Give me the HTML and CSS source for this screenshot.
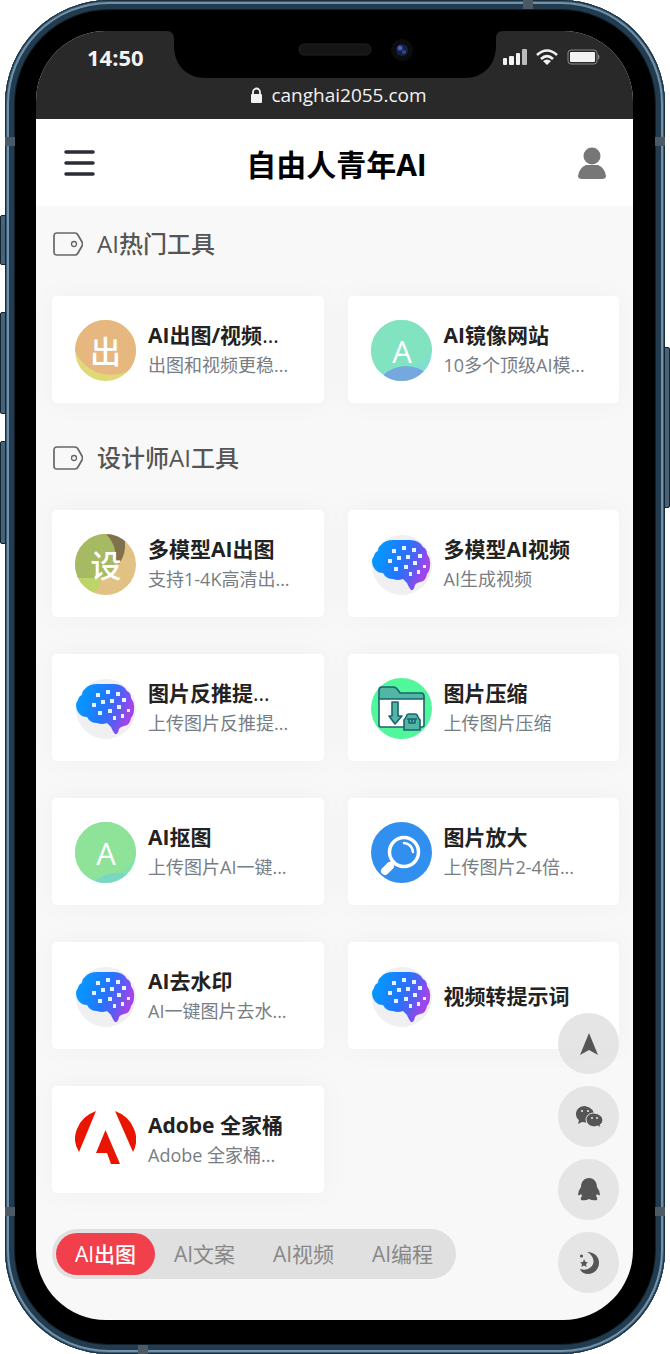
FILE: index.html
```html
<!DOCTYPE html>
<html lang="zh-CN">
<head>
  <meta charset="UTF-8" />
  <meta name="viewport" content="width=device-width, initial-scale=1" />
  <title>自由人青年AI</title>
  <link rel="stylesheet" href="styles.css">
</head>
<body>
  <!-- shared icons -->
  <svg class="sprite" aria-hidden="true">
    <defs>
      <linearGradient id="brain-fill" x1="0" y1="0" x2="1" y2="0.3">
        <stop offset="0.2" stop-color="#0894ff" />
        <stop offset="0.6" stop-color="#2673fb" />
        <stop offset="0.8" stop-color="#5b5bf3" />
        <stop offset="1" stop-color="#a344e8" />
      </linearGradient>
      <clipPath id="round"><circle cx="30.5" cy="30.5" r="30.5" /></clipPath>
    </defs>
    <symbol id="brain" viewBox="0 0 61 61">
      <circle cx="31" cy="31" r="30" fill="#f0f0f2" />
      <path fill="url(#brain-fill)" d="M10 11Q14 6 22 6H39Q48 6 52 13Q56 15 56 20Q60 25 59 31Q59 37 56 40Q55 47 49 48Q45 49 44 51Q43 57 40 56Q38 54 36 49L32 45Q27 47 22 45Q15 45 12 39Q6 39 3 34Q-1 27 3 22Q4 18 7 17Q7 13 10 11Z" />
      <path fill="#e5f5ff" d="M21 15h4v4h-4zM31 12h4v4h-4zM41 14h4v4h-4zM17 25h4v4h-4zM26 22h4v4h-4zM35 21h4v4h-4zM47 20h4v4h-4zM23 33h4v4h-4zM33 31h4v4h-4zM42 27h4v4h-4zM52 31h3v3h-3zM46 36h3v4h-3zM38 38h3v4h-3z" />
    </symbol>
    <symbol id="tag" viewBox="0 0 30 24">
      <path d="M4 1h18q2 0 3 2l4 7q1 2 0 4l-4 7q-1 2-3 2H4q-3 0-3-3V4q0-3 3-3Z" fill="none" stroke="#666" stroke-width="1.7" />
      <circle cx="21" cy="12" r="2.5" fill="none" stroke="#666" stroke-width="1.3" />
    </symbol>
  </svg>

  <div class="phone">
    <span class="side-key mute"></span>
    <span class="side-key vol-up"></span>
    <span class="side-key vol-down"></span>
    <span class="side-key power"></span>
    <span class="band band-top"></span>
    <span class="band band-bottom"></span>
    <span class="band band-left upper"></span>
    <span class="band band-left lower"></span>
    <span class="band band-right upper"></span>
    <span class="band band-right lower"></span>

    <div class="screen">
      <div class="status">
        <svg class="notch" width="338" height="48" viewBox="0 0 338 48" aria-hidden="true">
          <path d="M0 0H338C332 0 330 3 330 8V14C330 34 318 47 298 47H40C20 47 8 34 8 14V8C8 3 6 0 0 0Z" />
          <rect x="133" y="13" width="72" height="11" rx="5" fill="#151515" stroke="#222" />
          <circle cx="236" cy="19" r="11" fill="#0c0c0e" />
          <circle cx="236" cy="19" r="6" fill="#152246" />
          <circle cx="234" cy="17" r="2.5" fill="#4961ad" />
          <circle cx="238" cy="21" r="2" fill="#35478c" />
        </svg>
        <div class="status-row">
          <span class="clock">14:50</span>
          <span class="signals">
            <svg width="24" height="16" viewBox="0 0 24 16" fill="#f2f2f2" aria-hidden="true">
              <rect x="0" y="9" width="4" height="7" rx="1" />
              <rect x="6" y="7" width="5" height="9" rx="1" />
              <rect x="13" y="4" width="4" height="12" rx="1" />
              <rect x="19" y="0" width="5" height="16" rx="1" fill="#bbb" />
            </svg>
            <svg width="22" height="16" viewBox="0 0 22 16" fill="none" stroke="#f2f2f2" stroke-width="2.6" aria-hidden="true">
              <path d="M1 6Q11 -3 21 6M5 10Q11 4 17 10" />
              <path d="M11 16L7 12Q11 9 15 12Z" fill="#f2f2f2" stroke="none" />
            </svg>
            <svg width="34" height="16" viewBox="0 0 34 16" aria-hidden="true">
              <rect x="1" y="1" width="29" height="14" rx="3" fill="none" stroke="#888" />
              <rect x="3" y="3" width="25" height="10" rx="1" fill="#f2f2f2" />
              <path d="M31 5q3 3 0 6z" fill="#888" />
            </svg>
          </span>
        </div>
        <div class="address">
          <svg width="13" height="17" viewBox="0 0 13 17" aria-hidden="true">
            <rect x="1" y="7" width="11" height="9" rx="1" fill="#f2f2f2" />
            <path d="M3 8V5a3.5 3.5 0 0 1 7 0v3" fill="none" stroke="#f2f2f2" stroke-width="1.8" />
          </svg>
          canghai2055.com
        </div>
      </div>

      <header class="topbar">
        <button class="icon-btn" aria-label="菜单">
          <svg width="31" height="28" viewBox="0 0 31 28" stroke="#2b2d36" stroke-width="3.5" stroke-linecap="round">
            <path d="M2 3H29M2 14H29M2 25H29" />
          </svg>
        </button>
        <h1>自由人青年AI</h1>
        <button class="icon-btn" aria-label="用户">
          <svg width="28" height="32" viewBox="0 0 28 32" fill="#777">
            <circle cx="14" cy="9" r="8.5" />
            <path d="M8 18H20Q27 21 28 29Q28 32 24 32H4Q0 32 0 29Q1 21 8 18Z" />
          </svg>
        </button>
      </header>

      <main>
        <section>
          <h2><svg width="30" height="24" aria-hidden="true"><use href="#tag" /></svg>AI热门工具</h2>
          <div class="grid">
            <a class="card" href="#">
              <svg class="logo" viewBox="0 0 61 61" aria-hidden="true">
                <g clip-path="url(#round)">
                  <rect width="61" height="61" fill="#dfd977" />
                  <circle cx="36" cy="16" r="39" fill="#e6b77e" />
                </g>
                <text x="30.5" y="43">出</text>
              </svg>
              <span class="info"><strong>AI出图/视频<span class="dots">...</span></strong><small>出图和视频更稳...</small></span>
            </a>
            <a class="card" href="#">
              <svg class="logo" viewBox="0 0 61 61" aria-hidden="true">
                <g clip-path="url(#round)">
                  <rect width="61" height="61" fill="#7fdfd3" />
                  <ellipse cx="20" cy="5" rx="50" ry="47" fill="#81e3bf" />
                  <circle cx="35" cy="79" r="33" fill="#75a8df" />
                </g>
                <text x="31" y="43">A</text>
              </svg>
              <span class="info"><strong>AI镜像网站</strong><small>10多个顶级AI模...</small></span>
            </a>
          </div>
        </section>

        <section>
          <h2><svg width="30" height="24" aria-hidden="true"><use href="#tag" /></svg>设计师AI工具</h2>
          <div class="grid">
            <a class="card" href="#">
              <svg class="logo" viewBox="0 0 61 61" aria-hidden="true">
                <g clip-path="url(#round)">
                  <rect width="61" height="61" fill="#e2c184" />
                  <path d="M28 0H61L50 8Q51 20 44 30L36 24Z" fill="#80714e" />
                  <path d="M0 42H24Q28 50 20 58L0 61Z" fill="#bdd568" />
                  <path d="M0 0H31Q43 12 40 30Q37 46 18 44H0Z" fill="#a5ba62" />
                </g>
                <text x="31" y="43">设</text>
              </svg>
              <span class="info"><strong>多模型AI出图</strong><small>支持1-4K高清出...</small></span>
            </a>
            <a class="card" href="#">
              <svg class="logo" aria-hidden="true"><use href="#brain" /></svg>
              <span class="info"><strong>多模型AI视频</strong><small>AI生成视频</small></span>
            </a>
            <a class="card" href="#">
              <svg class="logo" aria-hidden="true"><use href="#brain" /></svg>
              <span class="info"><strong>图片反推提<span class="dots">...</span></strong><small>上传图片反推提...</small></span>
            </a>
            <a class="card" href="#">
              <svg class="logo" viewBox="0 0 61 61" aria-hidden="true">
                <circle cx="30.5" cy="30.5" r="30.5" fill="#50f79b" />
                <g stroke="#1c6271" stroke-width="1.6" stroke-linejoin="round">
                  <path d="M8 20H53V47Q53 49 51 49H10Q8 49 8 47Z" fill="#fff" />
                  <path d="M8 21V12Q8 9 11 9H22Q25 9 27 12L29 15H50Q53 15 53 18V21Z" fill="#4fb7a2" />
                  <path d="M21 24H27V38H31L24 46L18 38H21Z" fill="#4fb7a2" />
                  <path d="M33 42Q33 41 34 41L36 37Q36 36 38 36H44Q46 36 46 37L48 41Q49 41 49 42V52H33Z" fill="#4fb7a2" />
                  <path d="M36 41H46M38 41V45H44V41M41 41V44" fill="none" />
                </g>
              </svg>
              <span class="info"><strong>图片压缩</strong><small>上传图片压缩</small></span>
            </a>
            <a class="card" href="#">
              <svg class="logo" viewBox="0 0 61 61" aria-hidden="true">
                <g clip-path="url(#round)">
                  <rect width="61" height="61" fill="#82e2ad" />
                  <ellipse cx="20" cy="15" rx="46" ry="42" fill="#8ee399" />
                  <ellipse cx="42" cy="66" rx="24" ry="15" fill="#79d8c4" />
                </g>
                <text x="31" y="43">A</text>
              </svg>
              <span class="info"><strong>AI抠图</strong><small>上传图片AI一键...</small></span>
            </a>
            <a class="card" href="#">
              <svg class="logo" viewBox="0 0 61 61" aria-hidden="true">
                <circle cx="30.5" cy="30.5" r="30.5" fill="#318ff0" />
                <circle cx="33" cy="30" r="14.5" fill="none" stroke="#fff" stroke-width="3.5" />
                <path d="M33 21Q41 22 42 30" fill="none" stroke="#fff" stroke-width="2.5" stroke-linecap="round" />
                <path d="M22 40L19 43" stroke="#fff" stroke-width="4" />
                <path d="M19 44L14 49" stroke="#fff" stroke-width="8" stroke-linecap="round" />
              </svg>
              <span class="info"><strong>图片放大</strong><small>上传图片2-4倍...</small></span>
            </a>
            <a class="card" href="#">
              <svg class="logo" aria-hidden="true"><use href="#brain" /></svg>
              <span class="info"><strong>AI去水印</strong><small>AI一键图片去水...</small></span>
            </a>
            <a class="card" href="#">
              <svg class="logo" aria-hidden="true"><use href="#brain" /></svg>
              <span class="info"><strong>视频转提示词</strong></span>
            </a>
            <a class="card" href="#">
              <svg class="logo" viewBox="0 0 61 61" fill="#ea1500" aria-hidden="true">
                <path d="M21 1L4 42Q-3 31 2 19Q7 6 21 1Z" />
                <path d="M40 1L58 42Q64 31 59 19Q54 6 40 1Z" />
                <path d="M30.5 20L45 54H36L32 43H21Z" />
              </svg>
              <span class="info"><strong>Adobe 全家桶</strong><small>Adobe 全家桶...</small></span>
            </a>
          </div>
        </section>

        <nav class="tabs">
          <button class="active">AI出图</button>
          <button>AI文案</button>
          <button>AI视频</button>
          <button>AI编程</button>
        </nav>
      </main>

      <div class="float-tools">
        <button aria-label="返回顶部">
          <svg width="18" height="22" viewBox="0 0 18 22" fill="#555"><path d="M9 0L18 22L9 17L0 22Z" /></svg>
        </button>
        <button aria-label="微信">
          <svg width="28" height="23" viewBox="0 0 28 23">
            <path d="M10 1C4 1 1 5 1 9Q1 13 4 15L3 19L7 17Q16 19 19 12Q20 3 10 1Z" fill="#555" />
            <path d="M19 8C14 8 11 11 11 15Q12 21 19 22L23 21L26 23L25 20Q28 18 28 15Q27 9 19 8Z" fill="#555" stroke="#e5e5e5" />
            <g fill="#e5e5e5"><circle cx="7" cy="6" r="1.1" /><circle cx="13" cy="6" r="1.1" /><circle cx="17" cy="13" r="1" /><circle cx="22" cy="13" r="1" /></g>
          </svg>
        </button>
        <button aria-label="QQ">
          <svg width="22" height="23" viewBox="0 0 22 23" fill="#555">
            <path d="M11 0C6 0 3 4 3 9Q0 13 0 17Q1 18 3 16L4 18Q2 20 3 22Q8 23 11 21Q15 23 19 22Q20 20 18 18L19 16Q21 18 22 17Q22 13 19 9C19 4 16 0 11 0Z" />
          </svg>
        </button>
        <button aria-label="夜间模式">
          <svg width="20" height="22" viewBox="0 0 20 22" fill="#555">
            <path d="M8 0C16 0 20 5 20 11C20 18 14 22 9 22Q3 22 1 17Q8 19 12 15C17 10 14 3 8 0Z" />
            <path d="M5 7L6.500 10L9 10.200L7 12L7.600 15L5 13.500L2.400 15L3 12L1 10.200L4 10Z" />
            <circle cx="2.500" cy="4" r="1.600" />
          </svg>
        </button>
      </div>
    </div>
  </div>
</body>
</html>
```
FILE: styles.css
```css
* {
  box-sizing: border-box;
}

body {
  margin: 0;
  font-family: "Open Sans", "Noto Sans CJK SC", sans-serif;
  background: #fff;
  color: #222;
}

button {
  border: 0;
  padding: 0;
  background: none;
  font: inherit;
  cursor: pointer;
}

svg {
  display: block;
  flex-shrink: 0;
}

.sprite {
  position: absolute;
  width: 0;
  height: 0;
}

/* phone body */
.phone {
  position: relative;
  margin: 0 5px;
  padding: 31px 32px 34px 31px;
  border-radius: 104px;
  background: #000;
  box-shadow: inset 0 0 0 1px #192d3b, inset 0 0 0 2px #3c5d75, inset 0 0 0 4px #7191aa, inset 0 0 0 9px #223b4e, inset 0 0 0 10px #11202b;
}

.side-key {
  position: absolute;
  left: -5px;
  width: 6px;
  border: 1px solid #14242f;
  border-radius: 2px 0 0 2px;
  background: #476379;
}

.mute {
  top: 215px;
  height: 50px;
}

.vol-up {
  top: 312px;
  height: 102px;
}

.vol-down {
  top: 441px;
  height: 103px;
}

.power {
  top: 347px;
  left: auto;
  right: -5px;
  height: 161px;
  border-radius: 0 2px 2px 0;
}

.band {
  position: absolute;
  width: 10px;
  height: 9px;
  background: #4b5a64;
}

.band-top {
  top: 0;
  right: 132px;
}

.band-bottom {
  bottom: 0;
  left: 133px;
}

.band-left {
  left: 0;
}

.band-right {
  right: 0;
}

.upper {
  top: 137px;
}

.lower {
  bottom: 138px;
}

.screen {
  position: relative;
  overflow: hidden;
  border-radius: 70px;
  background: #f8f8f8;
}

/* status bar */
.status {
  position: relative;
  height: 88px;
  padding-top: 6px;
  background: #292929;
  color: #f2f2f2;
}

.notch {
  position: absolute;
  top: 0;
  left: 50%;
  transform: translateX(-50%);
}

.status-row {
  display: flex;
  align-items: center;
  justify-content: space-between;
  height: 40px;
  padding: 0 32px 0 51px;
}

.clock {
  font-size: 22px;
  font-weight: 700;
}

.signals {
  display: flex;
  gap: 9px;
}

.address {
  display: flex;
  align-items: center;
  justify-content: center;
  gap: 8px;
  padding-left: 8px;
  font-size: 19px;
  line-height: 36px;
}

/* page header */
.topbar {
  display: flex;
  align-items: center;
  justify-content: space-between;
  height: 87px;
  padding: 0 27px 0 28px;
  background: #fff;
}

.topbar h1 {
  margin: 0;
  font-size: 30px;
  font-weight: 700;
  color: #000;
}

main {
  padding: 0 14px 41px 16px;
}

section {
  margin-bottom: 17px;
}

h2 {
  display: flex;
  align-items: center;
  gap: 14px;
  margin: 0;
  padding: 20px 0 34px 1px;
  font-size: 24px;
  font-weight: 500;
  line-height: 36px;
  color: #555;
}

.grid {
  display: grid;
  grid-template-columns: 1fr 1fr;
  gap: 37px 24px;
}

.card {
  display: flex;
  align-items: center;
  gap: 12px;
  min-width: 0;
  height: 107px;
  padding: 1px 12px 0 23px;
  border-radius: 5px;
  background: #fff;
  box-shadow: 0 0 30px rgba(0, 0, 0, 0.035);
  color: #222;
  text-decoration: none;
}

.logo {
  width: 61px;
  height: 61px;
}

.logo text {
  fill: #fff;
  font-size: 31px;
  font-weight: 500;
  text-anchor: middle;
}

.info {
  display: flex;
  flex-direction: column;
  min-width: 0;
  white-space: nowrap;
}

.info strong {
  font-size: 21px;
  font-weight: 700;
  line-height: 30px;
}

.info small {
  font-size: 18px;
  line-height: 30px;
  color: #777d84;
}

.dots {
  font-weight: 400;
}

.tabs {
  display: flex;
  width: fit-content;
  margin-top: 36px;
  padding: 4px;
  border-radius: 25px;
  background: #e0e0e0;
}

.tabs button {
  width: 99px;
  border-radius: 21px;
  font-size: 21px;
  line-height: 42px;
  color: #888;
}

.tabs .active {
  background: #f1404b;
  color: #fff;
  font-weight: 500;
}

/* floating buttons */
.float-tools {
  position: absolute;
  right: 14px;
  bottom: 27px;
  display: flex;
  flex-direction: column;
  gap: 12px;
}

.float-tools button {
  display: flex;
  align-items: center;
  justify-content: center;
  width: 61px;
  height: 61px;
  border-radius: 50%;
  background: rgba(226, 226, 226, 0.9);
}
```
